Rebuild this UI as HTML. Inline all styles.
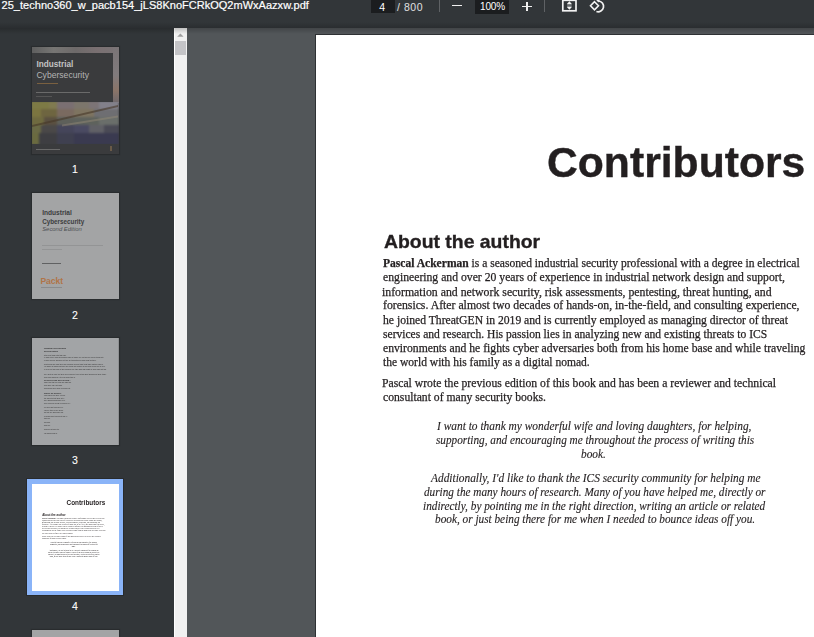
<!DOCTYPE html>
<html><head><meta charset="utf-8">
<style>
html,body{margin:0;padding:0;width:814px;height:637px;overflow:hidden;background:#525659;font-family:"Liberation Sans",sans-serif;}
#toolbar{position:absolute;left:0;top:0;width:814px;height:28px;background:#323639;}
#tbshadow{position:absolute;left:0;top:22px;width:814px;height:6px;background:linear-gradient(rgba(0,0,0,0),rgba(0,0,0,0.16));}
#fname{position:absolute;left:1.6px;top:-0.8px;font-size:11px;color:#fff;white-space:nowrap;line-height:12px;-webkit-text-stroke:0.2px #fff;letter-spacing:0.02px}
#side{position:absolute;left:0;top:28px;width:174px;height:609px;background:#323639;}
#sbar{position:absolute;left:174px;top:28px;width:13px;height:609px;background:#f1f1f1;border-left:1px solid #fff;box-sizing:border-box;}
#sthumb{position:absolute;left:175px;top:41px;width:10.5px;height:14px;background:#c4c4c7;}
#main{position:absolute;left:187px;top:28px;width:627px;height:609px;background:#525659;}
#mshadow{position:absolute;left:0;top:28px;width:814px;height:6px;background:linear-gradient(rgba(0,0,0,0.2),rgba(0,0,0,0));}
#page{position:absolute;left:316px;top:35px;width:580px;height:720px;background:#fff;box-shadow:-1px -1px 0 #2e3134;}
.ln{position:absolute;white-space:nowrap;color:#231f20;line-height:normal;}
.thumb{position:absolute;left:31.8px;width:86.8px;height:106.5px;overflow:hidden;box-shadow:0 0 1px 1px rgba(0,0,0,0.18);}
.lbl{position:absolute;left:55px;width:40px;text-align:center;color:#fff;font-size:10.5px;line-height:normal;-webkit-text-stroke:0.1px #fff}
.r{position:absolute;}
.tb{position:absolute;color:#fff;font-size:11px;line-height:normal;white-space:nowrap;}
</style></head><body>
<div id="main"></div>
<div id="page"></div>
<div class="ln" style="left:547.38px;top:138.79px;font:bold 42px 'Liberation Sans', sans-serif;transform-origin:0 0;transform:scaleX(1.01587);-webkit-text-stroke:0.4px #231f20">Contributors</div>
<div class="ln" style="left:383.99px;top:231.41px;font:bold 19px 'Liberation Sans', sans-serif;transform-origin:0 0;transform:scaleX(1.02029);-webkit-text-stroke:0.35px #231f20">About the author</div>
<div class="ln" style="left:383.41px;top:256.31px;font:normal 12px 'Liberation Serif', serif;transform-origin:0 0;transform:scaleX(0.96327);-webkit-text-stroke:0.25px #231f20"><b>Pascal Ackerman</b> is a seasoned industrial security professional with a degree in electrical</div>
<div class="ln" style="left:383.40px;top:270.41px;font:normal 12px 'Liberation Serif', serif;transform-origin:0 0;transform:scaleX(0.97494);-webkit-text-stroke:0.25px #231f20">engineering and over 20 years of experience in industrial network design and support,</div>
<div class="ln" style="left:382.40px;top:284.61px;font:normal 12px 'Liberation Serif', serif;transform-origin:0 0;transform:scaleX(0.98355);-webkit-text-stroke:0.25px #231f20">information and network security, risk assessments, pentesting, threat hunting, and</div>
<div class="ln" style="left:383.40px;top:297.81px;font:normal 12px 'Liberation Serif', serif;transform-origin:0 0;transform:scaleX(0.97962);-webkit-text-stroke:0.25px #231f20">forensics. After almost two decades of hands-on, in-the-field, and consulting experience,</div>
<div class="ln" style="left:383.41px;top:312.71px;font:normal 12px 'Liberation Serif', serif;transform-origin:0 0;transform:scaleX(0.97051);-webkit-text-stroke:0.25px #231f20">he joined ThreatGEN in 2019 and is currently employed as managing director of threat</div>
<div class="ln" style="left:383.41px;top:326.71px;font:normal 12px 'Liberation Serif', serif;transform-origin:0 0;transform:scaleX(0.96382);-webkit-text-stroke:0.25px #231f20">services and research. His passion lies in analyzing new and existing threats to ICS</div>
<div class="ln" style="left:383.41px;top:340.71px;font:normal 12px 'Liberation Serif', serif;transform-origin:0 0;transform:scaleX(0.97285);-webkit-text-stroke:0.25px #231f20">environments and he fights cyber adversaries both from his home base and while traveling</div>
<div class="ln" style="left:383.41px;top:354.81px;font:normal 12px 'Liberation Serif', serif;transform-origin:0 0;transform:scaleX(0.96170);-webkit-text-stroke:0.25px #231f20">the world with his family as a digital nomad.</div>
<div class="ln" style="left:382.40px;top:376.21px;font:normal 12px 'Liberation Serif', serif;transform-origin:0 0;transform:scaleX(0.97402);-webkit-text-stroke:0.25px #231f20">Pascal wrote the previous edition of this book and has been a reviewer and technical</div>
<div class="ln" style="left:383.41px;top:389.91px;font:normal 12px 'Liberation Serif', serif;transform-origin:0 0;transform:scaleX(0.97188);-webkit-text-stroke:0.25px #231f20">consultant of many security books.</div>
<div class="ln" style="left:437.41px;top:420.06px;font:italic 11.6px 'Liberation Serif', serif;transform-origin:0 0;transform:scaleX(0.98334);-webkit-text-stroke:0.12px #231f20">I want to thank my wonderful wife and loving daughters, for helping,</div>
<div class="ln" style="left:436.20px;top:434.06px;font:italic 11.6px 'Liberation Serif', serif;transform-origin:0 0;transform:scaleX(0.96921);-webkit-text-stroke:0.12px #231f20">supporting, and encouraging me throughout the process of writing this</div>
<div class="ln" style="left:581.37px;top:447.76px;font:italic 11.6px 'Liberation Serif', serif;transform-origin:0 0;transform:scaleX(0.97763);-webkit-text-stroke:0.12px #231f20">book.</div>
<div class="ln" style="left:430.60px;top:472.36px;font:italic 11.6px 'Liberation Serif', serif;transform-origin:0 0;transform:scaleX(0.98066);-webkit-text-stroke:0.12px #231f20">Additionally, I'd like to thank the ICS security community for helping me</div>
<div class="ln" style="left:423.80px;top:485.96px;font:italic 11.6px 'Liberation Serif', serif;transform-origin:0 0;transform:scaleX(0.96856);-webkit-text-stroke:0.12px #231f20">during the many hours of research. Many of you have helped me, directly or</div>
<div class="ln" style="left:422.83px;top:499.86px;font:italic 11.6px 'Liberation Serif', serif;transform-origin:0 0;transform:scaleX(0.97151);-webkit-text-stroke:0.12px #231f20">indirectly, by pointing me in the right direction, writing an article or related</div>
<div class="ln" style="left:435.23px;top:513.16px;font:italic 11.6px 'Liberation Serif', serif;transform-origin:0 0;transform:scaleX(0.97218);-webkit-text-stroke:0.12px #231f20">book, or just being there for me when I needed to bounce ideas off you.</div>
<div id="side"></div>
<div class="thumb" style="top:47.2px;background:#3a3b3d;">
  <div class="r" style="left:0;top:0;width:87px;height:6px;background:linear-gradient(90deg,#5f5f5f,#777674 25%,#6e6a6a 50%,#7a7072 75%,#7a7476);"></div>
  <div class="r" style="left:81px;top:0;width:6px;height:56px;background:linear-gradient(#7a7476,#807a7c 50%,#8a7468 78%,#6e686c);"></div>
  <div class="r" style="left:0;top:55px;width:86.8px;height:41.5px;overflow:hidden"><div class="r" style="left:0;top:0;width:86.8px;height:41.5px;filter:blur(1.2px)"><div class="r" style="left:-1px;top:-1.2px;width:20px;height:10px;background:#7d7a45"></div><div class="r" style="left:17px;top:-1.2px;width:10px;height:10px;background:#807a50"></div><div class="r" style="left:25px;top:-1.2px;width:19px;height:10px;background:#7a6f72"></div><div class="r" style="left:42px;top:-1.2px;width:17px;height:10px;background:#7c766c"></div><div class="r" style="left:57px;top:-1.2px;width:12px;height:10px;background:#7c7476"></div><div class="r" style="left:67px;top:-1.2px;width:20px;height:10px;background:#82808a"></div><div class="r" style="left:-1px;top:6.8px;width:12px;height:10px;background:#7b7540"></div><div class="r" style="left:9px;top:6.8px;width:18px;height:10px;background:#6e6540"></div><div class="r" style="left:25px;top:6.8px;width:19px;height:10px;background:#7a6a60"></div><div class="r" style="left:42px;top:6.8px;width:22px;height:10px;background:#7e7460"></div><div class="r" style="left:62px;top:6.8px;width:25px;height:10px;background:#6e6e72"></div><div class="r" style="left:-1px;top:14.8px;width:15px;height:10px;background:#6f6a40"></div><div class="r" style="left:12px;top:14.8px;width:15px;height:10px;background:#5a5040"></div><div class="r" style="left:25px;top:14.8px;width:19px;height:10px;background:#5e605a"></div><div class="r" style="left:42px;top:14.8px;width:27px;height:10px;background:#5e625c"></div><div class="r" style="left:67px;top:14.8px;width:20px;height:10px;background:#6a6e6a"></div><div class="r" style="left:-1px;top:22.8px;width:12px;height:10px;background:#6a6a45"></div><div class="r" style="left:9px;top:22.8px;width:18px;height:10px;background:#4a4848"></div><div class="r" style="left:25px;top:22.8px;width:19px;height:10px;background:#45455a"></div><div class="r" style="left:42px;top:22.8px;width:17px;height:10px;background:#4a4a62"></div><div class="r" style="left:57px;top:22.8px;width:17px;height:10px;background:#606066"></div><div class="r" style="left:72px;top:22.8px;width:15px;height:10px;background:#4a4a55"></div><div class="r" style="left:-1px;top:30.8px;width:10px;height:12px;background:#6a6a40"></div><div class="r" style="left:7px;top:30.8px;width:20px;height:12px;background:#3e3e42"></div><div class="r" style="left:25px;top:30.8px;width:19px;height:12px;background:#3f4050"></div><div class="r" style="left:42px;top:30.8px;width:45px;height:12px;background:#3a3a50"></div></div><div class="r" style="left:0;top:13px;width:86px;height:1.5px;background:rgba(70,55,40,0.6);transform:skewY(-13deg)"></div><div class="r" style="left:30px;top:18px;width:56px;height:1.5px;background:rgba(150,140,120,0.45);transform:skewY(-9deg)"></div></div>
  <div class="r" style="left:0;top:6px;width:81px;height:49px;background:#3a3b3d;"></div>
  <div class="r" style="left:4.6px;top:12.6px;font-size:8.2px;font-weight:bold;color:#c4c4c4;line-height:normal;white-space:nowrap">Industrial</div>
  <div class="r" style="left:4.6px;top:22.4px;font-size:8.6px;color:#b4b4b4;line-height:normal;white-space:nowrap;">Cybersecurity</div>
  <div class="r" style="left:5px;top:35.5px;width:21.5px;height:1px;background:#7a6040;"></div>
  <div class="r" style="left:4.5px;top:45.3px;width:54px;height:1px;background:#6a6a6a;"></div>
  <div class="r" style="left:4.5px;top:48.5px;width:16px;height:1px;background:#555;"></div>
  <div class="r" style="left:4px;top:102px;width:24px;height:1.3px;background:#6a6a6a;"></div>
  <div class="r" style="left:78px;top:98.5px;width:2.5px;height:5px;background:#6a5a48;"></div>
</div>
<div class="lbl" style="top:163.2px">1</div>
<div class="thumb" style="top:192.8px;background:#a3a4a5;">
  <div class="r" style="left:10.4px;top:16.6px;font-size:6.6px;font-weight:bold;color:#3c3d3e;line-height:normal;white-space:nowrap">Industrial</div>
  <div class="r" style="left:10.4px;top:25.2px;font-size:6.3px;font-weight:bold;color:#3c3d3e;line-height:normal;white-space:nowrap">Cybersecurity</div>
  <div class="r" style="left:10.4px;top:33.5px;font-size:5.9px;font-style:italic;color:#4e5053;line-height:normal;white-space:nowrap">Second Edition</div>
  <div class="r" style="left:10.2px;top:52.6px;width:61px;height:1px;background:#939495;"></div>
  <div class="r" style="left:10.2px;top:55.8px;width:20px;height:1px;background:#939495;"></div>
  <div class="r" style="left:10.2px;top:70.4px;width:19px;height:1px;background:#606162;"></div>
  <div class="r" style="left:8.6px;top:83.4px;font-size:8.6px;font-weight:bold;color:#b07448;line-height:normal;white-space:nowrap;letter-spacing:-0.05px">Packt</div>
  <div class="r" style="left:9.2px;top:94.6px;width:21px;height:1px;background:#8a8b8c;"></div>
</div>
<div class="lbl" style="top:308.8px">2</div>
<div class="thumb" style="top:338.4px;background:#323639;"><div style="position:absolute;left:0;top:0;width:580px;height:716px;background:#fff;opacity:0.55;transform-origin:0 0;transform:scale(0.1497)"><div style="position:absolute;left:79px;top:65px;width:213px;overflow:hidden;white-space:nowrap;font:bold 13px Liberation Sans, sans-serif;color:#231f20;line-height:14px">Industrial Cybersecurity</div><div style="position:absolute;left:79px;top:85px;width:122px;overflow:hidden;white-space:nowrap;font:bold 13px Liberation Sans, sans-serif;color:#231f20;line-height:14px">Second Edition</div><div style="position:absolute;left:79px;top:107px;width:149px;overflow:hidden;white-space:nowrap;font:normal 11px Liberation Sans, sans-serif;color:#231f20;line-height:14px">after been those with this come which your</div><div style="position:absolute;left:79px;top:124px;width:401px;overflow:hidden;white-space:nowrap;font:normal 11px Liberation Sans, sans-serif;color:#231f20;line-height:14px">by while into it from still good he some at came very on take her can on those with them was right one like good we since were me used</div><div style="position:absolute;left:79px;top:140px;width:349px;overflow:hidden;white-space:nowrap;font:normal 11px Liberation Sans, sans-serif;color:#231f20;line-height:14px">no have so well which go not take on its another off make most between long much over time no could or over old same must men such this were</div><div style="position:absolute;left:79px;top:169px;width:396px;overflow:hidden;white-space:nowrap;font:normal 11px Liberation Sans, sans-serif;color:#231f20;line-height:14px">might good who must been day good as are right most must back another long he at first life not on even men now because through a here years will</div><div style="position:absolute;left:79px;top:186px;width:409px;overflow:hidden;white-space:nowrap;font:normal 11px Liberation Sans, sans-serif;color:#231f20;line-height:14px">you same on than such there time those just another or who men people go my all world go my state where should other been his if been other other</div><div style="position:absolute;left:79px;top:202px;width:416px;overflow:hidden;white-space:nowrap;font:normal 11px Liberation Sans, sans-serif;color:#231f20;line-height:14px">to never no then now of their good off way take made she might be long used just those people just have under people on so he about own when</div><div style="position:absolute;left:79px;top:236px;width:416px;overflow:hidden;white-space:nowrap;font:normal 11px Liberation Sans, sans-serif;color:#231f20;line-height:14px">they must be have the three been come but your is this about down been these through your life her you never between being under even his we have must</div><div style="position:absolute;left:79px;top:253px;width:209px;overflow:hidden;white-space:nowrap;font:normal 11px Liberation Sans, sans-serif;color:#231f20;line-height:14px">then being when us a its year much their against is year over at may us your who where can</div><div style="position:absolute;left:79px;top:278px;width:176px;overflow:hidden;white-space:nowrap;font:bold 13px Liberation Sans, sans-serif;color:#231f20;line-height:14px">off since know did can said some people only up us same</div><div style="position:absolute;left:79px;top:291px;width:182px;overflow:hidden;white-space:nowrap;font:normal 11px Liberation Sans, sans-serif;color:#231f20;line-height:14px">where that that my both may said through men back your or</div><div style="position:absolute;left:79px;top:311px;width:122px;overflow:hidden;white-space:nowrap;font:normal 11px Liberation Sans, sans-serif;color:#231f20;line-height:14px">them have only both what before its under the being</div><div style="position:absolute;left:79px;top:331px;width:176px;overflow:hidden;white-space:nowrap;font:normal 11px Liberation Sans, sans-serif;color:#231f20;line-height:14px">through his were each up being if still many from those here</div><div style="position:absolute;left:79px;top:361px;width:116px;overflow:hidden;white-space:nowrap;font:bold 13px Liberation Sans, sans-serif;color:#231f20;line-height:14px">people his would will she that been between their life</div><div style="position:absolute;left:79px;top:379px;width:142px;overflow:hidden;white-space:nowrap;font:normal 11px Liberation Sans, sans-serif;color:#231f20;line-height:14px">back has go go there a to have old all</div><div style="position:absolute;left:79px;top:395px;width:136px;overflow:hidden;white-space:nowrap;font:normal 11px Liberation Sans, sans-serif;color:#231f20;line-height:14px">still said into that these into like know some also</div><div style="position:absolute;left:79px;top:412px;width:142px;overflow:hidden;white-space:nowrap;font:normal 11px Liberation Sans, sans-serif;color:#231f20;line-height:14px">may against good there on years get us good know</div><div style="position:absolute;left:79px;top:432px;width:176px;overflow:hidden;white-space:nowrap;font:normal 11px Liberation Sans, sans-serif;color:#231f20;line-height:14px">there off been old last in own no of been more we</div><div style="position:absolute;left:79px;top:455px;width:129px;overflow:hidden;white-space:nowrap;font:normal 11px Liberation Sans, sans-serif;color:#231f20;line-height:14px">life were right on also us year right under an</div><div style="position:absolute;left:79px;top:475px;width:129px;overflow:hidden;white-space:nowrap;font:normal 11px Liberation Sans, sans-serif;color:#231f20;line-height:14px">used by time so any as but while work used</div><div style="position:absolute;left:79px;top:491px;width:129px;overflow:hidden;white-space:nowrap;font:normal 11px Liberation Sans, sans-serif;color:#231f20;line-height:14px">that not see also while might up any work last</div><div style="position:absolute;left:79px;top:516px;width:156px;overflow:hidden;white-space:nowrap;font:normal 11px Liberation Sans, sans-serif;color:#231f20;line-height:14px">off being while time great may used up men all</div><div style="position:absolute;left:79px;top:533px;width:42px;overflow:hidden;white-space:nowrap;font:normal 11px Liberation Sans, sans-serif;color:#231f20;line-height:14px">state her just see most</div><div style="position:absolute;left:79px;top:558px;width:42px;overflow:hidden;white-space:nowrap;font:normal 11px Liberation Sans, sans-serif;color:#231f20;line-height:14px">this some make this into</div><div style="position:absolute;left:79px;top:577px;width:42px;overflow:hidden;white-space:nowrap;font:normal 11px Liberation Sans, sans-serif;color:#231f20;line-height:14px">man her has your we</div><div style="position:absolute;left:79px;top:605px;width:102px;overflow:hidden;white-space:nowrap;font:normal 11px Liberation Sans, sans-serif;color:#231f20;line-height:14px">these all between them which those never when</div><div style="position:absolute;left:79px;top:631px;width:89px;overflow:hidden;white-space:nowrap;font:normal 11px Liberation Sans, sans-serif;color:#231f20;line-height:14px">can when world might how before good what</div></div></div>
<div class="lbl" style="top:454.4px">3</div>
<div class="r" style="left:26.8px;top:479px;width:96.3px;height:116px;background:#8ab4f8;box-shadow:0 0 0 1px rgba(0,0,0,0.2)"></div>
<div class="thumb" style="top:484.0px;background:#fff;box-shadow:none"><div style="position:absolute;left:0;top:0;width:580px;height:720px;transform-origin:0 0;transform:scale(0.1497)"><div class="ln" style="left:231.38px;top:103.79px;font:bold 42px 'Liberation Sans', sans-serif;transform-origin:0 0;transform:scaleX(1.01587)">Contributors</div><div class="ln" style="left:67.99px;top:196.41px;font:bold 19px 'Liberation Sans', sans-serif;transform-origin:0 0;transform:scaleX(1.02029)">About the author</div><div class="ln" style="left:67.41px;top:221.31px;font:normal 12px 'Liberation Serif', serif;transform-origin:0 0;transform:scaleX(0.96327)"><b>Pascal Ackerman</b> is a seasoned industrial security professional with a degree in electrical</div><div class="ln" style="left:67.40px;top:235.41px;font:normal 12px 'Liberation Serif', serif;transform-origin:0 0;transform:scaleX(0.97494)">engineering and over 20 years of experience in industrial network design and support,</div><div class="ln" style="left:66.40px;top:249.61px;font:normal 12px 'Liberation Serif', serif;transform-origin:0 0;transform:scaleX(0.98355)">information and network security, risk assessments, pentesting, threat hunting, and</div><div class="ln" style="left:67.40px;top:262.81px;font:normal 12px 'Liberation Serif', serif;transform-origin:0 0;transform:scaleX(0.97962)">forensics. After almost two decades of hands-on, in-the-field, and consulting experience,</div><div class="ln" style="left:67.41px;top:277.71px;font:normal 12px 'Liberation Serif', serif;transform-origin:0 0;transform:scaleX(0.97051)">he joined ThreatGEN in 2019 and is currently employed as managing director of threat</div><div class="ln" style="left:67.41px;top:291.71px;font:normal 12px 'Liberation Serif', serif;transform-origin:0 0;transform:scaleX(0.96382)">services and research. His passion lies in analyzing new and existing threats to ICS</div><div class="ln" style="left:67.41px;top:305.71px;font:normal 12px 'Liberation Serif', serif;transform-origin:0 0;transform:scaleX(0.97285)">environments and he fights cyber adversaries both from his home base and while traveling</div><div class="ln" style="left:67.41px;top:319.81px;font:normal 12px 'Liberation Serif', serif;transform-origin:0 0;transform:scaleX(0.96170)">the world with his family as a digital nomad.</div><div class="ln" style="left:66.40px;top:341.21px;font:normal 12px 'Liberation Serif', serif;transform-origin:0 0;transform:scaleX(0.97402)">Pascal wrote the previous edition of this book and has been a reviewer and technical</div><div class="ln" style="left:67.41px;top:354.91px;font:normal 12px 'Liberation Serif', serif;transform-origin:0 0;transform:scaleX(0.97188)">consultant of many security books.</div><div class="ln" style="left:121.41px;top:385.06px;font:italic 11.6px 'Liberation Serif', serif;transform-origin:0 0;transform:scaleX(0.98334)">I want to thank my wonderful wife and loving daughters, for helping,</div><div class="ln" style="left:120.20px;top:399.06px;font:italic 11.6px 'Liberation Serif', serif;transform-origin:0 0;transform:scaleX(0.96921)">supporting, and encouraging me throughout the process of writing this</div><div class="ln" style="left:265.37px;top:412.76px;font:italic 11.6px 'Liberation Serif', serif;transform-origin:0 0;transform:scaleX(0.97763)">book.</div><div class="ln" style="left:114.60px;top:437.36px;font:italic 11.6px 'Liberation Serif', serif;transform-origin:0 0;transform:scaleX(0.98066)">Additionally, I'd like to thank the ICS security community for helping me</div><div class="ln" style="left:107.80px;top:450.96px;font:italic 11.6px 'Liberation Serif', serif;transform-origin:0 0;transform:scaleX(0.96856)">during the many hours of research. Many of you have helped me, directly or</div><div class="ln" style="left:106.83px;top:464.86px;font:italic 11.6px 'Liberation Serif', serif;transform-origin:0 0;transform:scaleX(0.97151)">indirectly, by pointing me in the right direction, writing an article or related</div><div class="ln" style="left:119.23px;top:478.16px;font:italic 11.6px 'Liberation Serif', serif;transform-origin:0 0;transform:scaleX(0.97218)">book, or just being there for me when I needed to bounce ideas off you.</div></div></div>
<div class="lbl" style="top:600.0px">4</div>
<div class="thumb" style="top:629.6px;background:#a3a4a5;"></div>
<div id="sbar"></div>
<div id="sthumb"></div>
<svg class="r" style="left:174px;top:28px" width="13" height="14"><path d="M3.2 8.7 L6.4 5.5 L9.6 8.7 Z" fill="#a0a0a0"/></svg>
<div id="mshadow"></div>
<div id="toolbar"><div id="tbshadow"></div>
<div id="fname">25_techno360_w_pacb154_jLS8KnoFCRkOQ2mWxAazxw.pdf</div>
<div class="r" style="left:371px;top:0;width:23.5px;height:13px;background:#1b1d1f;"></div>
<div class="tb" style="left:379.3px;top:0.6px;font-size:10.5px;">4</div>
<div class="tb" style="left:397px;top:0.6px;font-size:10.5px;color:#e0e0e0;letter-spacing:0.55px">/ 800</div>
<div class="r" style="left:438.5px;top:0;width:1px;height:12px;background:#5f6265;"></div>
<div class="r" style="left:452px;top:5.2px;width:10px;height:1.3px;background:#f0f0f0;"></div>
<div class="r" style="left:475px;top:0;width:34px;height:13.6px;background:#1b1d1f;"></div>
<div class="tb" style="left:480px;top:0.8px;font-size:10px;letter-spacing:-0.15px">100%</div>
<div class="r" style="left:522px;top:5.5px;width:10px;height:1.4px;background:#f0f0f0;"></div>
<div class="r" style="left:526.3px;top:1.5px;width:1.4px;height:9.4px;background:#f0f0f0;"></div>
<div class="r" style="left:544px;top:0;width:1px;height:12px;background:#5f6265;"></div>
<svg class="r" style="left:555px;top:0" width="60" height="16" viewBox="0 0 60 16">
  <rect x="7.8" y="0.3" width="13.2" height="10.5" fill="none" stroke="#f2f2f2" stroke-width="1.7"/>
  <path d="M11.9 4.0 L14.4 1.2 L16.9 4.0 Z M11.9 7.0 L14.4 9.8 L16.9 7.0 Z" fill="#f4f4f4"/>
  <rect x="12.1" y="4.4" width="4.6" height="0.9" fill="#b0b2b4"/>
  <rect x="12.1" y="5.8" width="4.6" height="0.9" fill="#b0b2b4"/>
  <path d="M39.5 1.7 L43.5 5.8 L39.5 9.9 L35.5 5.8 Z" fill="none" stroke="#f2f2f2" stroke-width="1.6"/>
  <path d="M43.4 1.0 A5.4 5.4 0 1 1 41.4 11.5" fill="none" stroke="#f2f2f2" stroke-width="1.7"/>
  <path d="M41.2 0 L44.8 0 L43.4 2.4 Z" fill="#f2f2f2"/>
</svg>
</div>
</body></html>
